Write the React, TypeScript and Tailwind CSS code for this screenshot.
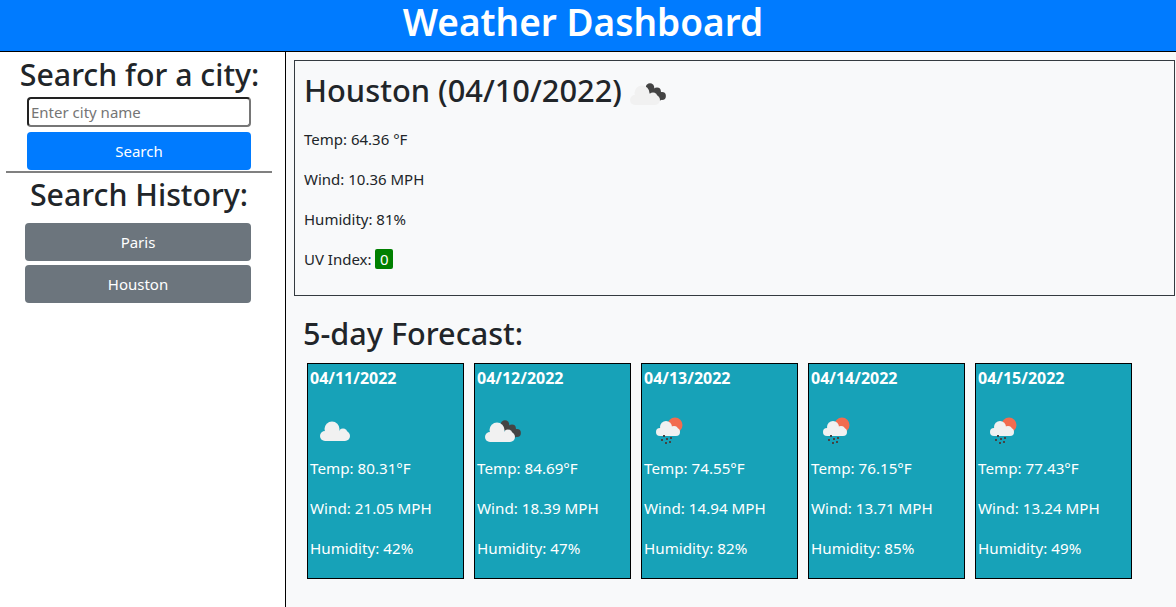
const font = "font-['Noto_Sans','Open_Sans',sans-serif]"

function WeatherIcon({ kind, className }: { kind: 'cloud' | 'broken' | 'rain'; className?: string }) {
  if (kind === 'rain') {
    return (
      <svg viewBox="0 0 50 49" className={className}>
        <circle cx="31" cy="17" r="7.5" fill="#f26c4f" />
        <g fill="#f1f1f1">
          <circle cx="22" cy="19" r="6" />
          <circle cx="30" cy="22" r="4" />
          <rect x="12" y="20" width="24" height="8" rx="4" />
        </g>
        <g fill="#444444">
          <rect x="19" y="27" width="2" height="2" />
          <rect x="17" y="31" width="2" height="2" />
          <rect x="22" y="30" width="2" height="2" />
          <rect x="26" y="29" width="2" height="2" />
          <rect x="25" y="33" width="2" height="2" />
          <rect x="21" y="34" width="2" height="2" />
        </g>
      </svg>
    )
  }
  if (kind === 'broken') {
    return (
      <svg viewBox="0 0 50 49" className={className}>
        <g fill="#444444">
          <circle cx="28" cy="16.5" r="4.2" />
          <circle cx="35" cy="20.5" r="3.9" />
          <circle cx="40" cy="25" r="3.9" />
          <path d="M25 14 L43 23 L38 30 L24 20 Z" />
        </g>
        <g fill="#f1f1f1">
          <circle cx="20" cy="22" r="7.5" />
          <circle cx="31" cy="26" r="4.5" />
          <rect x="8" y="24" width="30" height="10" rx="5" />
        </g>
      </svg>
    )
  }
  return (
    <svg viewBox="0 0 50 49" className={className}>
      <g fill="#f1f1f1">
        <circle cx="22" cy="21" r="7.5" />
        <circle cx="33" cy="25" r="4.5" />
        <rect x="10" y="23" width="30" height="10" rx="5" />
      </g>
    </svg>
  )
}

const days = [
  { date: '04/11/2022', kind: 'cloud', temp: '80.31', wind: '21.05', hum: '42' },
  { date: '04/12/2022', kind: 'broken', temp: '84.69', wind: '18.39', hum: '47' },
  { date: '04/13/2022', kind: 'rain', temp: '74.55', wind: '14.94', hum: '82' },
  { date: '04/14/2022', kind: 'rain', temp: '76.15', wind: '13.71', hum: '85' },
  { date: '04/15/2022', kind: 'rain', temp: '77.43', wind: '13.24', hum: '49' },
] as const

export default function App() {
  return (
    <div className={`${font} flex h-[607px] flex-col overflow-hidden bg-white text-[#212529]`}>
      <header className="flex h-[52px] shrink-0 items-center justify-center border-b border-black bg-[#007bff] pr-[10px] pb-2">
        <h1 className="text-[37px] leading-[40px] font-semibold text-white">Weather Dashboard</h1>
      </header>
      <div className="flex min-h-0 flex-1">
        <aside className="flex w-[286px] shrink-0 flex-col border-r border-black">
          <h2 className="ml-1 w-[271px] pt-1 text-center text-[30.3px] leading-[38px] font-medium">Search for a city:</h2>
          <input
            placeholder="Enter city name"
            className="mt-[3px] ml-[27px] h-[30px] w-[224px] rounded-[4px] border-2 border-t-[#222222] border-r-[#767676] border-b-[#767676] border-l-[#222222] bg-white px-[2px] text-[15px] outline-none placeholder:text-[#757575]"
          />
          <button className="mt-[5px] ml-[27px] h-[38px] w-[224px] rounded-[4px] bg-[#007bff] text-[15px] text-white">Search</button>
          <hr className="mt-px ml-[6px] w-[266px] border-t-2 border-[#808080]" />
          <h2 className="ml-1 w-[270px] pt-[3px] text-center text-[30.3px] leading-[38px] font-medium">Search History:</h2>
          <div className="mt-[9px] ml-[25px] flex w-[226px] flex-col gap-1">
            <button className="h-[38px] rounded-[4px] bg-[#6c757d] text-[15px] text-white">Paris</button>
            <button className="h-[38px] rounded-[4px] bg-[#6c757d] text-[15px] text-white">Houston</button>
          </div>
        </aside>
        <main className="min-w-0 flex-1 bg-[#f8f9fa] pt-2 pl-2">
          <section className="mr-px flex h-[236px] flex-col border border-[#343a40] pl-[9px]">
            <div className="flex h-[58px] items-center">
              <h2 className="text-[30.8px] leading-[38px] font-medium">Houston (04/10/2022)</h2>
              <WeatherIcon kind="broken" className="mt-[10px] h-[49px] w-[50px]" />
            </div>
            <div className="flex flex-col gap-[18px] pt-[9px] text-[15px] leading-[22px]">
              <p>Temp: 64.36 °F</p>
              <p>Wind: 10.36 MPH</p>
              <p>Humidity: 81%</p>
              <p>
                UV Index: <span className="rounded-[2px] bg-[#008000] px-[4.5px] text-white">0</span>
              </p>
            </div>
          </section>
          <h2 className="pt-[18px] pl-[9px] text-[30.6px] leading-[38px] font-medium">5-day Forecast:</h2>
          <div className="mt-[11px] ml-[13px] flex gap-[10px]">
            {days.map((d) => (
              <article key={d.date} className="h-[216px] w-[157px] border border-black bg-[#17a2b8] pt-[2px] pl-[2px] text-[15.2px] leading-[22px] text-white">
                <div className="text-[16px] leading-6 font-bold">{d.date}</div>
                <WeatherIcon kind={d.kind} className="mt-[18px] h-[49px] w-[50px]" />
                <div className="flex flex-col gap-[18px]">
                  <p>Temp: {d.temp}°F</p>
                  <p>Wind: {d.wind} MPH</p>
                  <p>Humidity: {d.hum}%</p>
                </div>
              </article>
            ))}
          </div>
        </main>
      </div>
    </div>
  )
}
